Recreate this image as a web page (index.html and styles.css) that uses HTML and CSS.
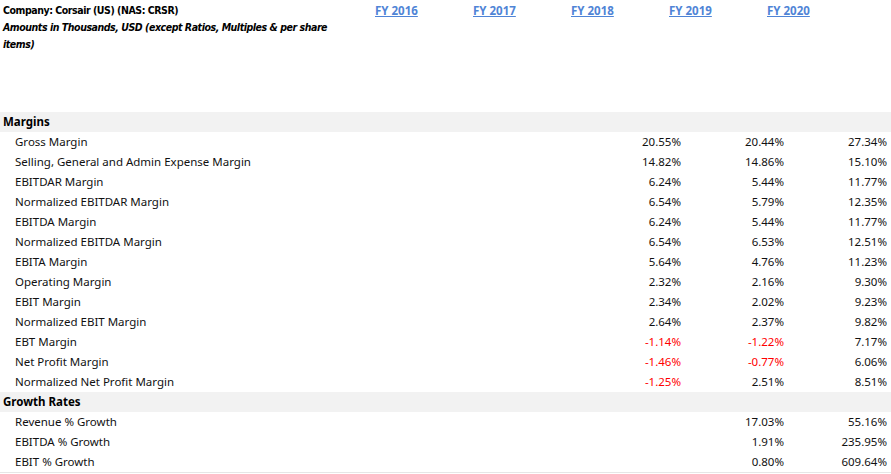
FILE: index.html
```html
<!DOCTYPE html>
<html lang="en">
<head>
  <meta charset="UTF-8" />
  <title>Corsair - Margins and Growth Rates</title>
  <link rel="stylesheet" href="styles.css">
</head>
<body>

  <div class="top">
    <div class="company">
      <div class="company-name">Company: Corsair (US) (NAS: CRSR)</div>
      <div class="company-note">Amounts in Thousands, USD (except Ratios, Multiples &amp; per share items)</div>
    </div>
    <div class="years">
      <a href="#">FY 2016</a>
      <a href="#">FY 2017</a>
      <a href="#">FY 2018</a>
      <a href="#">FY 2019</a>
      <a href="#">FY 2020</a>
    </div>
  </div>

  <div class="sheet">
    <div class="section">Margins</div>
    <div class="row"><span class="label">Gross Margin</span><span></span><span></span><span>20.55%</span><span>20.44%</span><span>27.34%</span></div>
    <div class="row"><span class="label">Selling, General and Admin Expense Margin</span><span></span><span></span><span>14.82%</span><span>14.86%</span><span>15.10%</span></div>
    <div class="row"><span class="label">EBITDAR Margin</span><span></span><span></span><span>6.24%</span><span>5.44%</span><span>11.77%</span></div>
    <div class="row"><span class="label">Normalized EBITDAR Margin</span><span></span><span></span><span>6.54%</span><span>5.79%</span><span>12.35%</span></div>
    <div class="row"><span class="label">EBITDA Margin</span><span></span><span></span><span>6.24%</span><span>5.44%</span><span>11.77%</span></div>
    <div class="row"><span class="label">Normalized EBITDA Margin</span><span></span><span></span><span>6.54%</span><span>6.53%</span><span>12.51%</span></div>
    <div class="row"><span class="label">EBITA Margin</span><span></span><span></span><span>5.64%</span><span>4.76%</span><span>11.23%</span></div>
    <div class="row"><span class="label">Operating Margin</span><span></span><span></span><span>2.32%</span><span>2.16%</span><span>9.30%</span></div>
    <div class="row"><span class="label">EBIT Margin</span><span></span><span></span><span>2.34%</span><span>2.02%</span><span>9.23%</span></div>
    <div class="row"><span class="label">Normalized EBIT Margin</span><span></span><span></span><span>2.64%</span><span>2.37%</span><span>9.82%</span></div>
    <div class="row"><span class="label">EBT Margin</span><span></span><span></span><span class="neg">-1.14%</span><span class="neg">-1.22%</span><span>7.17%</span></div>
    <div class="row"><span class="label">Net Profit Margin</span><span></span><span></span><span class="neg">-1.46%</span><span class="neg">-0.77%</span><span>6.06%</span></div>
    <div class="row"><span class="label">Normalized Net Profit Margin</span><span></span><span></span><span class="neg">-1.25%</span><span>2.51%</span><span>8.51%</span></div>

    <div class="section">Growth Rates</div>
    <div class="row"><span class="label">Revenue % Growth</span><span></span><span></span><span></span><span>17.03%</span><span>55.16%</span></div>
    <div class="row"><span class="label">EBITDA % Growth</span><span></span><span></span><span></span><span>1.91%</span><span>235.95%</span></div>
    <div class="row last"><span class="label">EBIT % Growth</span><span></span><span></span><span></span><span>0.80%</span><span>609.64%</span></div>
  </div>

</body>
</html>
```

FILE: styles.css
```css
body {
  margin: 0;
  font-family: "Noto Sans", Arial, sans-serif;
  font-size: 11.5px;
  color: #111;
  background-color: #fff;
}

/* Cabeçalho */
.top {
  display: flex;
  height: 112px;
}

.company {
  width: 340px;
  padding: 2px 0 0 3px;
  font-family: "DejaVu Sans Condensed", "Liberation Sans", sans-serif;
  font-size: 10.5px;
  font-weight: bold;
  line-height: 17px;
  letter-spacing: -0.45px;
  color: #000;
}

.company-note {
  font-style: italic;
}

.years {
  display: flex;
  padding: 2px 0 0 32px;
}

.years a {
  width: 98px;
  color: #4f84d6;
  font-weight: bold;
  font-size: 11.5px;
  text-decoration: underline;
  line-height: 18px;
}

/* Tabela */
.sheet {
  width: 891px;
}

.section {
  height: 20px;
  line-height: 20px;
  padding-left: 3px;
  background-color: #f2f2f2;
  font-weight: bold;
  color: #000;
}

.row {
  display: grid;
  grid-template-columns: 372px repeat(5, 103px) 4px;
  height: 20px;
  line-height: 20px;
}

.row span {
  text-align: right;
  white-space: nowrap;
}

.row .label {
  text-align: left;
  padding-left: 15px;
}

.row .neg {
  color: #ff0000;
}

.row.last {
  border-bottom: 1px solid #e6e6e6;
}
```
